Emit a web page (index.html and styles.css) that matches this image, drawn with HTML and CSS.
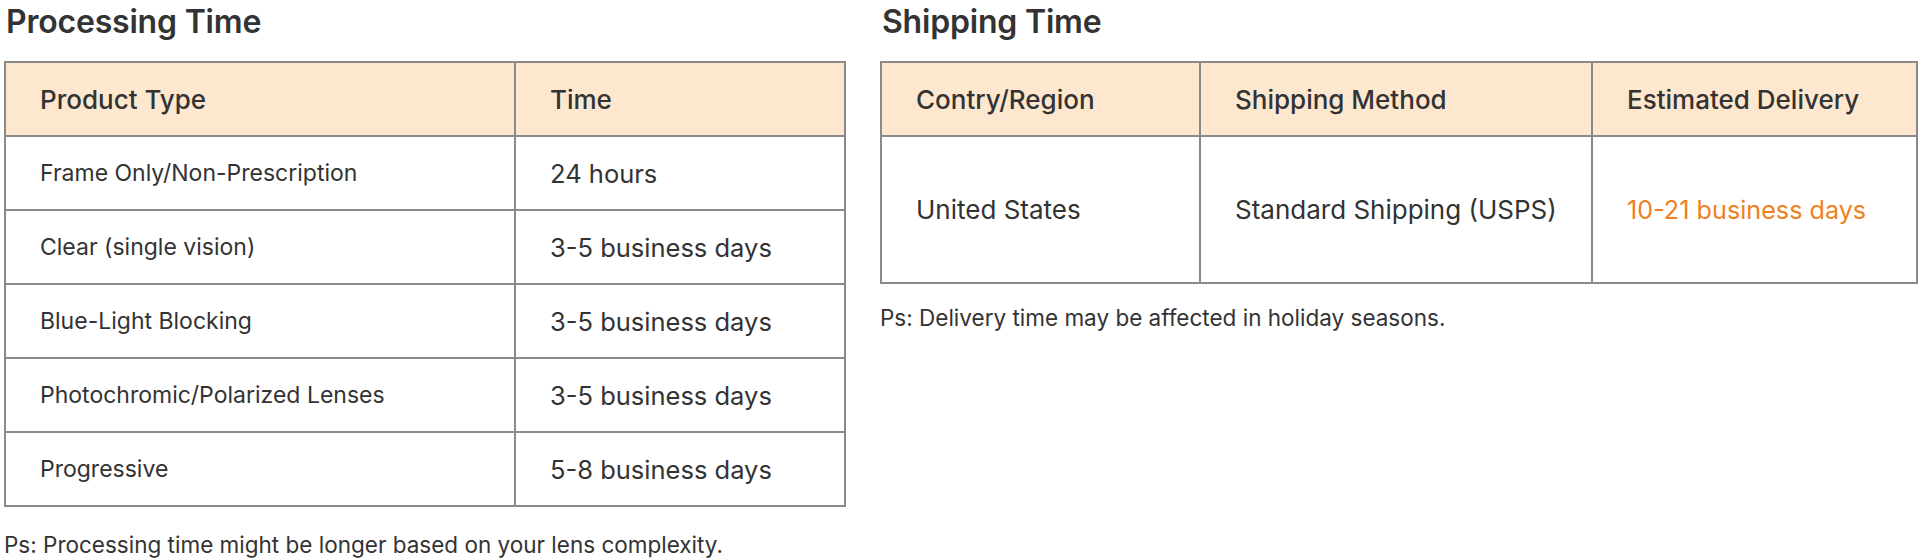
FILE: index.html
```html
<!DOCTYPE html>
<html lang="en">
<head>
<meta charset="utf-8">
<title>Processing &amp; Shipping Time</title>
<link rel="stylesheet" href="styles.css">
</head>
<body>
<div class="page">
  <section class="block block-processing">
    <h2 class="title">Processing Time</h2>
    <table class="grid">
      <thead>
        <tr><th class="col-type">Product Type</th><th>Time</th></tr>
      </thead>
      <tbody>
        <tr><td class="name">Frame Only/Non-Prescription</td><td class="val">24 hours</td></tr>
        <tr><td class="name">Clear (single vision)</td><td class="val">3-5 business days</td></tr>
        <tr><td class="name">Blue-Light Blocking</td><td class="val">3-5 business days</td></tr>
        <tr><td class="name">Photochromic/Polarized Lenses</td><td class="val">3-5 business days</td></tr>
        <tr><td class="name">Progressive</td><td class="val">5-8 business days</td></tr>
      </tbody>
    </table>
    <p class="note note-processing">Ps: Processing time might be longer based on your lens complexity.</p>
  </section>
  <section class="block block-shipping">
    <h2 class="title">Shipping Time</h2>
    <table class="grid">
      <thead>
        <tr><th class="col-region">Contry/Region</th><th class="col-method">Shipping Method</th><th>Estimated Delivery</th></tr>
      </thead>
      <tbody>
        <tr class="tall"><td class="val-lg">United States</td><td class="val-lg">Standard Shipping (USPS)</td><td class="val-lg accent">10-21 business days</td></tr>
      </tbody>
    </table>
    <p class="note note-shipping">Ps: Delivery time may be affected in holiday seasons.</p>
  </section>
</div>
</body>
</html>
```

FILE: styles.css
```css
html, body {
  margin: 0;
  padding: 0;
  background: #ffffff;
}

body {
  font-family: Inter, "Noto Sans", sans-serif;
  color: #333333;
}

.page {
  display: flex;
  align-items: flex-start;
  gap: 34px;
  padding: 0 2px 0 4px;
}

.block-processing {
  width: 842px;
  flex: none;
}

.block-shipping {
  flex: 1;
}

.title {
  margin: 0 0 0 2px;
  height: 61px;
  font-size: 32px;
  line-height: 44px;
  font-weight: 600;
  letter-spacing: -0.2px;
  color: #333333;
}

.grid {
  width: 100%;
  border-collapse: collapse;
  table-layout: fixed;
}

.grid th,
.grid td {
  border: 2px solid #8a8a8a;
  text-align: left;
  padding: 0 0 0 34px;
  vertical-align: middle;
  white-space: nowrap;
}

.grid th {
  background: #fde7cf;
  height: 72px;
  font-size: 26px;
  font-weight: 500;
  color: #333333;
}

.grid td {
  height: 72px;
}

.col-type {
  width: 474px;
}

.col-region {
  width: 283px;
}

.col-method {
  width: 356px;
}

.name {
  font-size: 23px;
  font-weight: 400;
}

.val {
  font-size: 25.5px;
  font-weight: 400;
}

.val-lg {
  font-size: 26px;
  font-weight: 400;
}

.tall td {
  height: 145px;
}

.accent {
  font-size: 25.2px;
  color: #f0801c;
}

.note {
  margin: 0;
  font-size: 22.5px;
  line-height: 27px;
  font-weight: 400;
  color: #333333;
}

.note-processing {
  margin-top: 24px;
}

.note-shipping {
  margin-top: 20px;
}
```
